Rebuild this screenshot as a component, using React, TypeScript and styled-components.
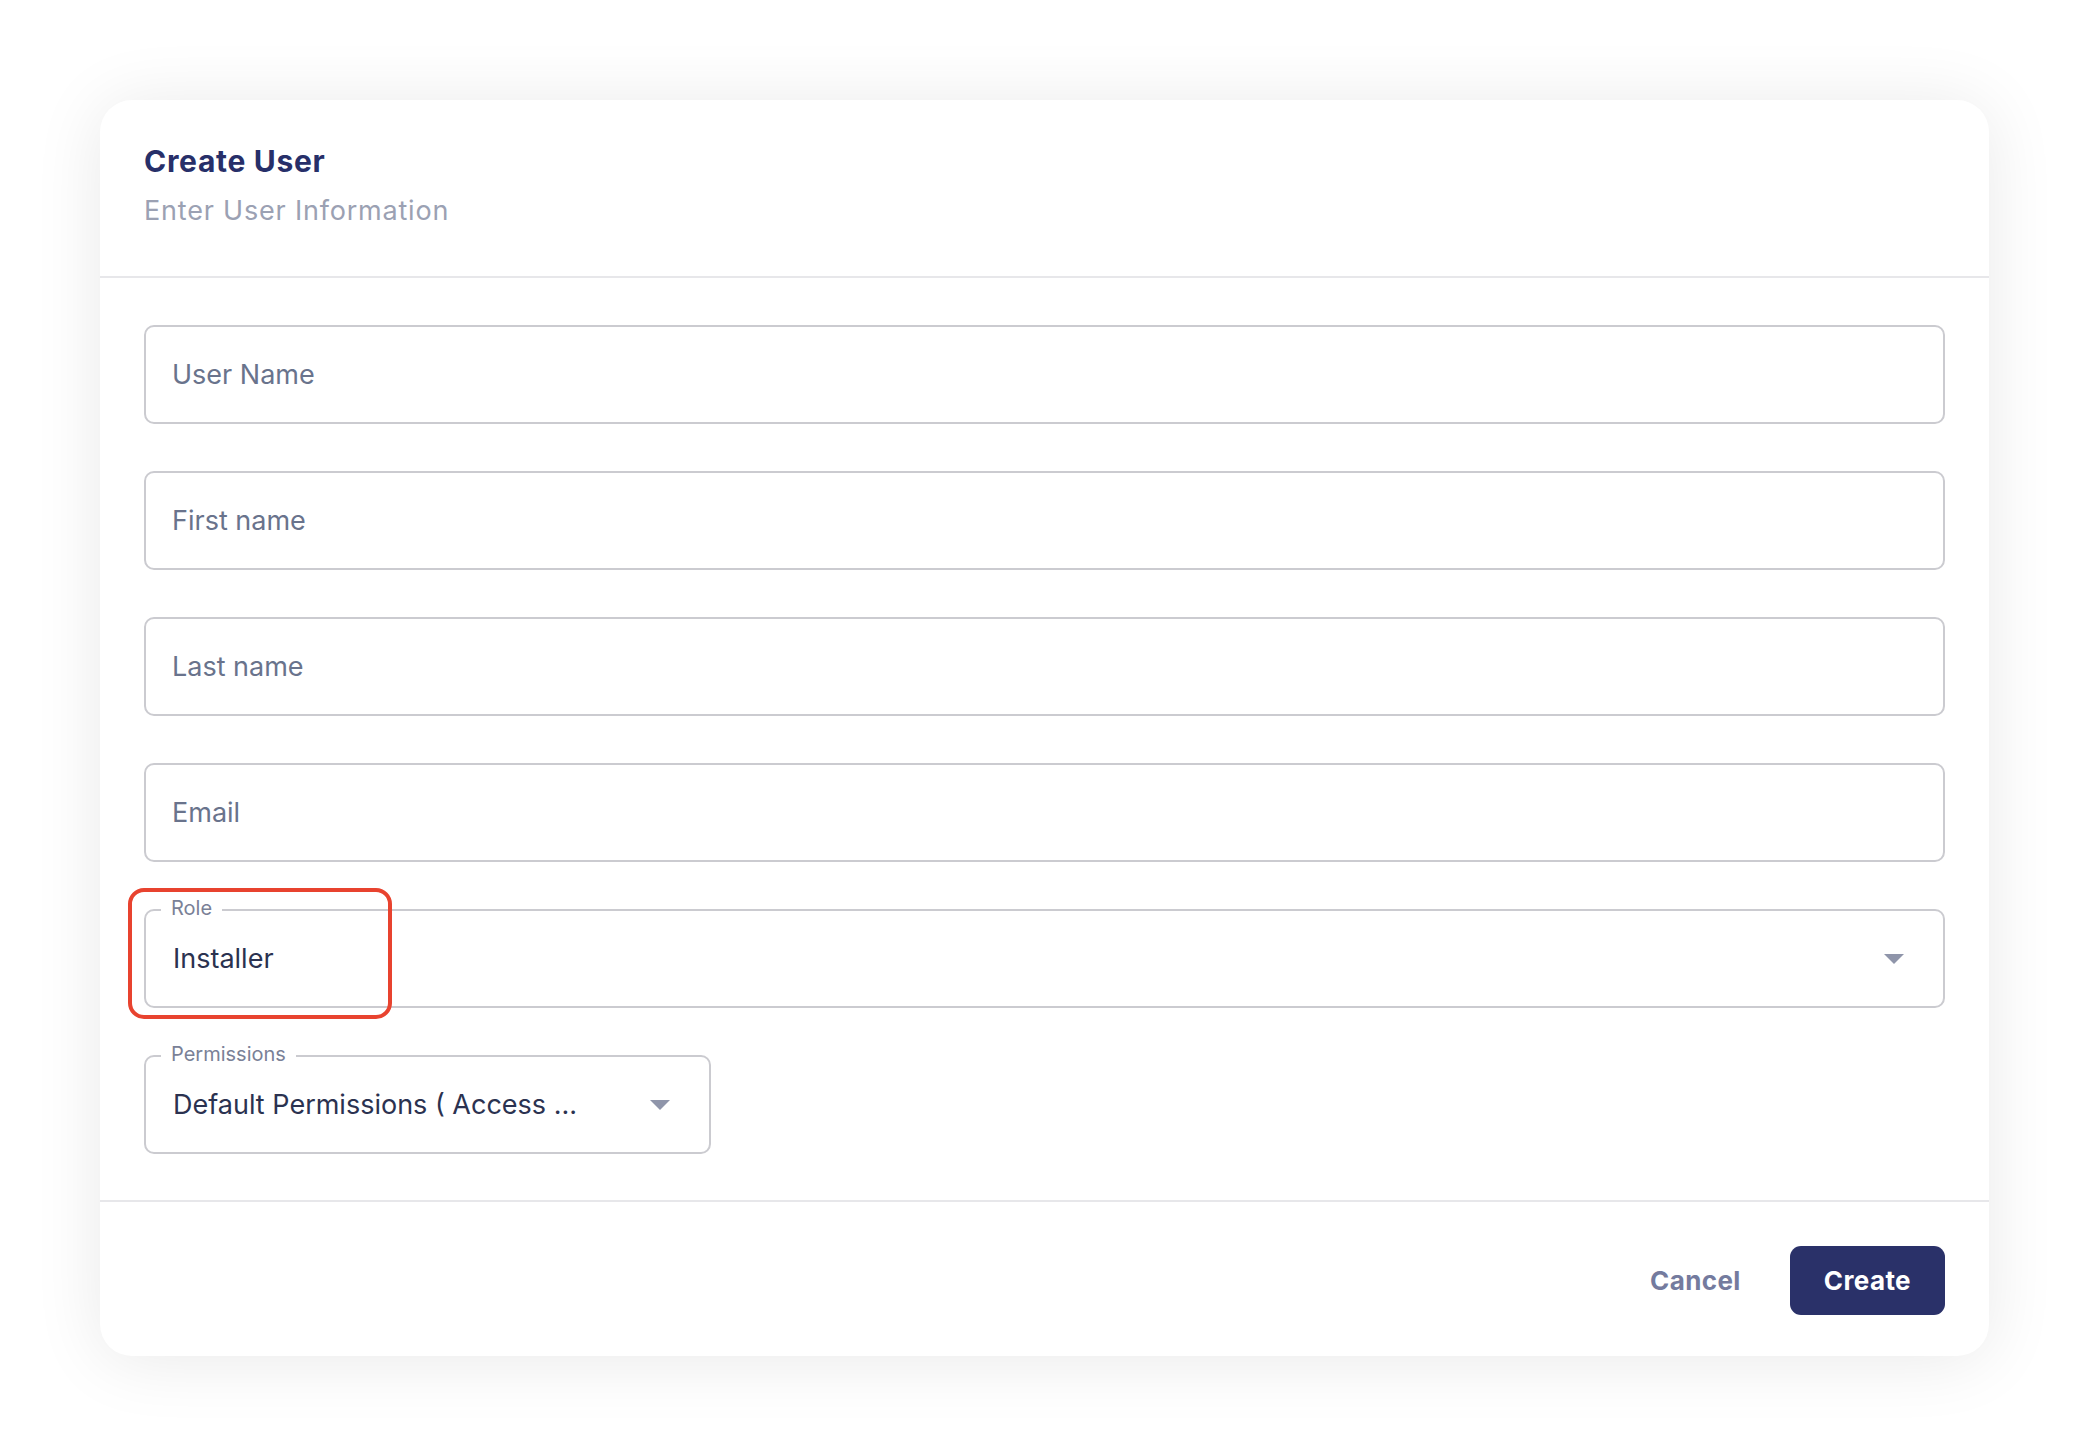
import styled, { createGlobalStyle } from "styled-components";

const GlobalStyle = createGlobalStyle`
  body {
    margin: 0;
    background: #ffffff;
    font-family: Inter, "Liberation Sans", sans-serif;
  }
  * { box-sizing: border-box; }
`;

const Page = styled.div`
  padding: 100px;
`;

const Card = styled.div`
  background: #ffffff;
  border-radius: 32px;
  box-shadow: 0 4px 70px rgba(0, 0, 0, 0.09);
`;

const Header = styled.div`
  padding: 43px 44px 49px;
  border-bottom: 2px solid #e7e7ea;
`;

const Title = styled.h1`
  margin: 0;
  font-size: 30px;
  line-height: 36px;
  font-weight: 700;
  letter-spacing: 0.7px;
  color: #272f69;
`;

const Subtitle = styled.p`
  margin: 15px 0 0;
  font-size: 27px;
  line-height: 33px;
  letter-spacing: 0.8px;
  color: #9ba1b3;
`;

const Form = styled.div`
  padding: 47px 44px 46px;
  display: flex;
  flex-direction: column;
  gap: 47px;
  border-bottom: 2px solid #e7e7ea;
`;

const TextInput = styled.input`
  height: 99px;
  width: 100%;
  border: 2px solid #cbcbd0;
  border-radius: 10px;
  padding: 0 26px;
  font-family: inherit;
  font-size: 27px;
  color: #2b3250;
  outline: none;
  &::placeholder {
    color: #69738c;
  }
`;

const SelectField = styled.div<{ $width?: number }>`
  position: relative;
  height: 99px;
  width: ${(p) => (p.$width ? `${p.$width}px` : "100%")};
  border: 2px solid #cbcbd0;
  border-radius: 10px;
  padding: 0 39px 0 27px;
  display: flex;
  align-items: center;
  justify-content: space-between;
`;

const FieldLabel = styled.span`
  position: absolute;
  left: 15px;
  top: -15px;
  padding: 0 10px;
  background: #ffffff;
  font-size: 20px;
  line-height: 24px;
  color: #7a8197;
`;

const SelectValue = styled.span`
  font-size: 27px;
  color: #2b3250;
  white-space: nowrap;
`;

const Caret = styled.span`
  width: 0;
  height: 0;
  border-left: 10px solid transparent;
  border-right: 10px solid transparent;
  border-top: 10px solid #8f95aa;
`;

const Highlight = styled.div`
  position: absolute;
  left: -18px;
  top: -23px;
  width: 264px;
  height: 131px;
  border: 4px solid #e8432f;
  border-radius: 16px;
  pointer-events: none;
`;

const Footer = styled.div`
  display: flex;
  justify-content: flex-end;
  align-items: center;
  padding: 44px 44px 41px;
`;

const CancelButton = styled.button`
  background: none;
  border: none;
  padding: 0;
  margin-right: 49px;
  font-family: inherit;
  font-size: 26px;
  font-weight: 700;
  letter-spacing: 0.4px;
  color: #747b9e;
  cursor: pointer;
`;

const CreateButton = styled.button`
  height: 69px;
  padding: 0 34px;
  border: none;
  border-radius: 11px;
  background: #2a3169;
  color: #ffffff;
  font-family: inherit;
  font-size: 26px;
  font-weight: 700;
  letter-spacing: 0.4px;
  cursor: pointer;
`;

const App = () => {
  return (
    <>
      <GlobalStyle />
      <Page>
        <Card>
          <Header>
            <Title>Create User</Title>
            <Subtitle>Enter User Information</Subtitle>
          </Header>
          <Form>
            <TextInput placeholder="User Name" />
            <TextInput placeholder="First name" />
            <TextInput placeholder="Last name" />
            <TextInput placeholder="Email" />
            <SelectField>
              <FieldLabel>Role</FieldLabel>
              <SelectValue>Installer</SelectValue>
              <Caret />
              <Highlight />
            </SelectField>
            <SelectField $width={567}>
              <FieldLabel>Permissions</FieldLabel>
              <SelectValue>Default Permissions ( Access ...</SelectValue>
              <Caret />
            </SelectField>
          </Form>
          <Footer>
            <CancelButton>Cancel</CancelButton>
            <CreateButton>Create</CreateButton>
          </Footer>
        </Card>
      </Page>
    </>
  );
};

export default App;
